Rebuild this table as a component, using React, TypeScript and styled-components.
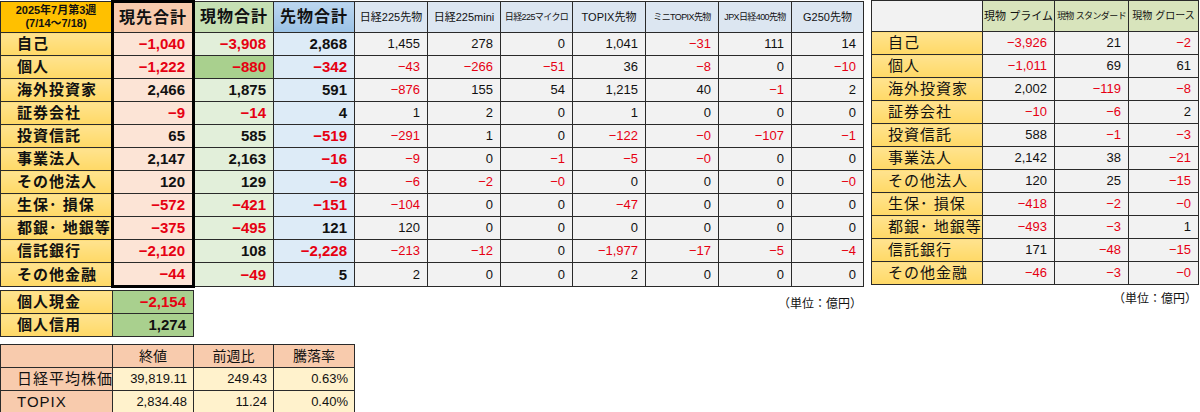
import React from "react";
import styled, { createGlobalStyle, css } from "styled-components";

const GlobalStyle = createGlobalStyle`
  html, body {
    margin: 0;
    padding: 0;
    background: #ffffff;
  }
  body {
    font-family: "Liberation Sans", "Noto Sans CJK JP", sans-serif;
    color: #111;
  }
`;

const RED = "#e60012";

type Row = { label: string; values: string[] };

const mainRows: Row[] = [
  { label: "自己", values: ["−1,040", "−3,908", "2,868", "1,455", "278", "0", "1,041", "−31", "111", "14"] },
  { label: "個人", values: ["−1,222", "−880", "−342", "−43", "−266", "−51", "36", "−8", "0", "−10"] },
  { label: "海外投資家", values: ["2,466", "1,875", "591", "−876", "155", "54", "1,215", "40", "−1", "2"] },
  { label: "証券会社", values: ["−9", "−14", "4", "1", "2", "0", "1", "0", "0", "0"] },
  { label: "投資信託", values: ["65", "585", "−519", "−291", "1", "0", "−122", "−0", "−107", "−1"] },
  { label: "事業法人", values: ["2,147", "2,163", "−16", "−9", "0", "−1", "−5", "−0", "0", "0"] },
  { label: "その他法人", values: ["120", "129", "−8", "−6", "−2", "−0", "0", "0", "0", "−0"] },
  { label: "生保･ 損保", values: ["−572", "−421", "−151", "−104", "0", "0", "−47", "0", "0", "0"] },
  { label: "都銀･ 地銀等", values: ["−375", "−495", "121", "120", "0", "0", "0", "0", "0", "0"] },
  { label: "信託銀行", values: ["−2,120", "108", "−2,228", "−213", "−12", "0", "−1,977", "−17", "−5", "−4"] },
  { label: "その他金融", values: ["−44", "−49", "5", "2", "0", "0", "2", "0", "0", "0"] },
];

const primeRows: string[][] = [
  ["−3,926", "21", "−2"],
  ["−1,011", "69", "61"],
  ["2,002", "−119", "−8"],
  ["−10", "−6", "2"],
  ["588", "−1", "−3"],
  ["2,142", "38", "−21"],
  ["120", "25", "−15"],
  ["−418", "−2", "−0"],
  ["−493", "−3", "1"],
  ["171", "−48", "−15"],
  ["−46", "−3", "−0"],
];

const futureHeads: { text: string; size: number; squeeze?: boolean }[] = [
  { text: "日経225先物", size: 11 },
  { text: "日経225mini", size: 11 },
  { text: "日経225マイクロ", size: 9, squeeze: true },
  { text: "TOPIX先物", size: 11 },
  { text: "ミニTOPIX先物", size: 9, squeeze: true },
  { text: "JPX日経400先物", size: 9, squeeze: true },
  { text: "G250先物", size: 11 },
];

const mainCols = [112, 81, 80, 81, 73, 73, 72, 73, 73, 73, 72];
const primeCols = [111, 72, 74, 70];
const personalCols = [112, 81];
const marketCols = [112, 81, 80, 81];

const Page = styled.div`
  width: 1200px;
  height: 412px;
  display: flex;
  gap: 7px;
  overflow: hidden;
`;

const Column = styled.div`
  display: flex;
  flex-direction: column;
`;

const Table = styled.table<{ $w: number }>`
  width: ${(p) => p.$w}px;
  border-collapse: collapse;
  table-layout: fixed;
`;

const Col = styled.col<{ $w: number }>`
  width: ${(p) => p.$w}px;
`;

const Head = styled.th<{ $bg: string; $size?: number; $thick?: boolean; $squeeze?: boolean }>`
  height: 31px;
  padding: 0;
  box-sizing: border-box;
  background: ${(p) => p.$bg};
  border: 1px solid #2a2a2a;
  font-size: ${(p) => p.$size ?? 11}px;
  font-weight: normal;
  line-height: 1;
  text-align: center;
  white-space: nowrap;
  overflow: hidden;
  letter-spacing: ${(p) => (p.$squeeze ? "-0.6px" : "0")};
  ${(p) =>
    p.$thick &&
    css`
      border-left: 3px solid #000;
      border-right: 3px solid #000;
      border-top: 3px solid #000;
    `}
`;

const BigHead = styled(Head)`
  font-size: 16px;
  font-weight: bold;
  letter-spacing: 1px;
`;

const WeekHead = styled(Head)`
  font-size: 11px;
  font-weight: bold;
  line-height: 13px;
`;

const Label = styled.td<{ $bold?: boolean; $bg?: string }>`
  height: 22px;
  padding: 0 0 0 16px;
  background: ${(p) => p.$bg ?? "linear-gradient(#ffe38f, #ffd966)"};
  border: 1px solid #2a2a2a;
  font-size: 15px;
  font-weight: ${(p) => (p.$bold ? "bold" : "normal")};
  line-height: 20px;
  letter-spacing: 1px;
  white-space: nowrap;
  overflow: hidden;
`;

const Num = styled.td<{
  $bg: string;
  $neg: boolean;
  $bold?: boolean;
  $thick?: boolean;
  $last?: boolean;
}>`
  height: 22px;
  padding: 0 7px 0 0;
  background: ${(p) => p.$bg};
  border: 1px solid #2a2a2a;
  text-align: right;
  font-size: ${(p) => (p.$bold ? 15 : 13)}px;
  font-weight: ${(p) => (p.$bold ? "bold" : "normal")};
  line-height: 20px;
  color: ${(p) => (p.$neg ? RED : "#111")};
  white-space: nowrap;
  ${(p) =>
    p.$thick &&
    css`
      border-left: 3px solid #000;
      border-right: 3px solid #000;
    `}
  ${(p) =>
    p.$thick &&
    p.$last &&
    css`
      border-bottom: 3px solid #000;
    `}
`;

const Note = styled.div`
  margin-left: auto;
  font-size: 12px;
  line-height: 16px;
  padding: 5px 2px 0 0;
  font-family: "Noto Sans CJK JP", sans-serif;
`;

const Under = styled.div`
  display: flex;
  align-items: flex-start;
  padding-top: 2px;
`;

const Stack = styled.div`
  display: flex;
  flex-direction: column;
  gap: 7px;
`;

const MarketHead = styled.th<{ $bg: string }>`
  height: 22px;
  padding: 0;
  background: ${(p) => p.$bg};
  border: 1px solid #2a2a2a;
  font-size: 14px;
  font-weight: normal;
  line-height: 20px;
  text-align: center;
`;

const MarketCell = styled.td`
  height: 22px;
  padding: 0 6px 0 0;
  background: #fff2cc;
  border: 1px solid #2a2a2a;
  font-size: 13px;
  line-height: 20px;
  text-align: right;
`;

const neg = (v: string) => v.startsWith("−");

const dataBg = (col: number, row: number) => {
  if (col === 0) return "#fce4d6";
  if (col === 1) return row === 1 ? "#a9d08e" : "#e2efda";
  if (col === 2) return "#ddebf7";
  return "#f2f2f2";
};

function Cols({ widths }: { widths: number[] }) {
  return (
    <colgroup>
      {widths.map((w, i) => (
        <Col key={i} $w={w} />
      ))}
    </colgroup>
  );
}

function MainTable() {
  return (
    <Table $w={863}>
      <Cols widths={mainCols} />
      <thead>
        <tr>
          <WeekHead $bg="#ffc000">
            2025年7月第3週
            <br />
            (7/14～7/18)
          </WeekHead>
          <BigHead $bg="#f8cbad" $thick>現先合計</BigHead>
          <BigHead $bg="#c6e0b4">現物合計</BigHead>
          <BigHead $bg="linear-gradient(#bcd6ef, #9bc2e6)">先物合計</BigHead>
          {futureHeads.map((h) => (
            <Head key={h.text} $bg="#dce6f1" $size={h.size} $squeeze={h.squeeze}>
              {h.text}
            </Head>
          ))}
        </tr>
      </thead>
      <tbody>
        {mainRows.map((r, ri) => (
          <tr key={r.label}>
            <Label $bold>{r.label}</Label>
            {r.values.map((v, ci) => (
              <Num
                key={ci}
                $bg={dataBg(ci, ri)}
                $neg={neg(v)}
                $bold={ci < 3}
                $thick={ci === 0}
                $last={ri === mainRows.length - 1}
              >
                {v}
              </Num>
            ))}
          </tr>
        ))}
      </tbody>
    </Table>
  );
}

function PrimeTable() {
  return (
    <Table $w={327}>
      <Cols widths={primeCols} />
      <thead>
        <tr>
          <Head $bg="#f2f2f2" />
          <Head $bg="#d8e4bc" $size={11}>現物 プライム</Head>
          <Head $bg="#d8e4bc" $size={9} $squeeze>現物 スタンダード</Head>
          <Head $bg="#d8e4bc" $size={10}>現物 グロース</Head>
        </tr>
      </thead>
      <tbody>
        {primeRows.map((vals, ri) => (
          <tr key={ri}>
            <Label>{mainRows[ri].label}</Label>
            {vals.map((v, ci) => (
              <Num key={ci} $bg="#f2f2f2" $neg={neg(v)}>
                {v}
              </Num>
            ))}
          </tr>
        ))}
      </tbody>
    </Table>
  );
}

function PersonalTable() {
  const rows = [
    { label: "個人現金", value: "−2,154" },
    { label: "個人信用", value: "1,274" },
  ];
  return (
    <Table $w={193}>
      <Cols widths={personalCols} />
      <tbody>
        {rows.map((r) => (
          <tr key={r.label}>
            <Label $bold>{r.label}</Label>
            <Num $bg="#a9d08e" $neg={neg(r.value)} $bold>
              {r.value}
            </Num>
          </tr>
        ))}
      </tbody>
    </Table>
  );
}

function MarketTable() {
  const rows = [
    { label: "日経平均株価", values: ["39,819.11", "249.43", "0.63%"] },
    { label: "TOPIX", values: ["2,834.48", "11.24", "0.40%"] },
  ];
  return (
    <Table $w={354}>
      <Cols widths={marketCols} />
      <thead>
        <tr>
          <MarketHead $bg="#f8cbad" />
          <MarketHead $bg="#f8cbad">終値</MarketHead>
          <MarketHead $bg="#f8cbad">前週比</MarketHead>
          <MarketHead $bg="#f8cbad">騰落率</MarketHead>
        </tr>
      </thead>
      <tbody>
        {rows.map((r) => (
          <tr key={r.label}>
            <Label $bg="#f8cbad">{r.label}</Label>
            {r.values.map((v) => (
              <MarketCell key={v}>{v}</MarketCell>
            ))}
          </tr>
        ))}
      </tbody>
    </Table>
  );
}

export default function App() {
  return (
    <>
      <GlobalStyle />
      <Page>
        <Column>
          <MainTable />
          <Under>
            <Stack>
              <PersonalTable />
              <MarketTable />
            </Stack>
            <Note>（単位：億円）</Note>
          </Under>
        </Column>
        <Column>
          <PrimeTable />
          <Note>（単位：億円）</Note>
        </Column>
      </Page>
    </>
  );
}
